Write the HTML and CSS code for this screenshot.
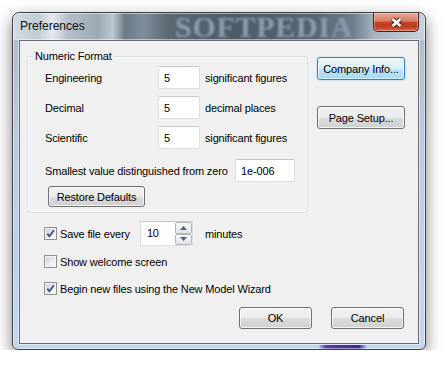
FILE: index.html
```html
<!DOCTYPE html>
<html lang="en">
<head>
    <meta charset="UTF-8">
    <title>Preferences</title>
    <link rel="stylesheet" href="styles.css">
</head>
<body>
    <div class="window">
        <div class="titlebar">
            <span class="title">Preferences</span>
            <span class="glass-mark">SOFTPEDIA</span>
            <button class="close" title="Close">
                <svg width="15" height="11" viewBox="0 0 15 11">
                    <path d="M3.5 2 L11.5 9 M11.5 2 L3.5 9" stroke="#4a2019" stroke-width="4.6" fill="none"/>
                    <path d="M3.5 2 L11.5 9 M11.5 2 L3.5 9" stroke="#fff" stroke-width="2.6" fill="none"/>
                </svg>
            </button>
        </div>

        <div class="client">
            <div class="main">
                <div class="left">
                    <div class="group">
                        <span class="group-title">Numeric Format</span>
                        <div class="fields">
                            <span>Engineering</span>
                            <input class="field" value="5">
                            <span class="unit-text">significant figures</span>

                            <span>Decimal</span>
                            <input class="field" value="5">
                            <span class="unit-text">decimal places</span>

                            <span>Scientific</span>
                            <input class="field" value="5">
                            <span class="unit-text">significant figures</span>
                        </div>
                        <div class="smallest">
                            <span class="smallest-label">Smallest value distinguished from zero</span>
                            <input class="field field-wide" value="1e-006">
                        </div>
                        <button class="btn restore">Restore Defaults</button>
                    </div>

                    <div class="options">
                        <div class="option option-save">
                            <span class="check"><svg width="11" height="11" viewBox="0 0 11 11"><path d="M2.3 5.6 L4.4 8.3 L8.9 2.2" stroke="#3f5488" stroke-width="1.9" fill="none"/></svg></span>
                            <span>Save file every</span>
                            <div class="spin">
                                <span class="spin-value">10</span>
                                <div class="spin-btns">
                                    <span class="spin-btn"><svg width="7" height="4" viewBox="0 0 7 4"><path d="M0 4 L3.5 0 L7 4 Z" fill="#4c6184"/></svg></span>
                                    <span class="spin-btn"><svg width="7" height="4" viewBox="0 0 7 4"><path d="M0 0 L7 0 L3.5 4 Z" fill="#4c6184"/></svg></span>
                                </div>
                            </div>
                            <span class="minutes">minutes</span>
                        </div>
                        <div class="option option-welcome">
                            <span class="check"></span>
                            <span>Show welcome screen</span>
                        </div>
                        <div class="option option-wizard">
                            <span class="check"><svg width="11" height="11" viewBox="0 0 11 11"><path d="M2.3 5.6 L4.4 8.3 L8.9 2.2" stroke="#3f5488" stroke-width="1.9" fill="none"/></svg></span>
                            <span>Begin new files using the New Model Wizard</span>
                        </div>
                    </div>
                </div>

                <div class="side">
                    <button class="btn btn-side btn-focus">Company Info...</button>
                    <button class="btn btn-side">Page Setup...</button>
                </div>
            </div>

            <div class="actions">
                <button class="btn btn-dialog">OK</button>
                <button class="btn btn-dialog">Cancel</button>
            </div>
        </div>
    </div>
</body>
</html>
```

FILE: styles.css
```css
/* Page */
body {
    margin: 0;
    background: #fff;
    font-family: "Liberation Sans", Arial, sans-serif;
    font-size: 11px;
    letter-spacing: -0.15px;
    color: #000;
}

/* Window frame (Aero glass) */
.window {
    position: relative;
    margin: 12px 0 0 12px;
    width: 414px;
    height: 338px;
    box-sizing: border-box;
    border: 1px solid #3b4148;
    border-radius: 7px 7px 6px 6px;
    display: flex;
    flex-direction: column;
    box-shadow: 0 6px 16px rgba(0, 0, 0, 0.5), inset 0 0 0 1px rgba(255, 255, 255, 0.5);
    background:
        linear-gradient(to right, transparent 74%, #5a3c9e 76%, #3f2a8c 84%, transparent 86%) bottom / 100% 4px no-repeat,
        linear-gradient(to right, #d3dbe2 0px, #c2ccd5 25px, #e4e9ee 40px, #b3bfca 55px, #9ca8b3 85px, #bcc8d4 100px, #6b7985 112px, #7f8e9b 130px, #5b6974 155px, #4d5b66 220px, #56646f 300px, #6e7d8a 340px, #a8b5c1 362px, #c8d2db 412px) top / 100% 27px no-repeat,
        linear-gradient(to bottom, #aebbc8 0%, #b9cbe0 40%, #c3d6ee 100%);
}

.titlebar {
    position: relative;
    height: 27px;
    display: flex;
    align-items: flex-start;
}

.title {
    position: relative;
    z-index: 1;
    padding-left: 7px;
    line-height: 27px;
    font-size: 12px;
    letter-spacing: 0;
    color: #111;
}

.glass-mark {
    position: absolute;
    left: 162px;
    top: -1px;
    font: bold 30px/30px "Liberation Serif", serif;
    letter-spacing: 0.7px;
    color: #8a9db0;
    filter: blur(1.2px);
}

.close {
    position: relative;
    margin-left: auto;
    margin-right: 6px;
    width: 46px;
    height: 19px;
    padding: 0;
    border: 1px solid #4e1d15;
    border-top: none;
    border-radius: 0 0 5px 5px;
    background: linear-gradient(#e8a897 0%, #d77d64 45%, #c24229 52%, #bf3b22 75%, #da6648 100%);
    box-shadow: inset 0 0 0 1px rgba(255, 255, 255, 0.35);
    display: flex;
    align-items: center;
    justify-content: center;
}

/* Client area */
.client {
    margin: 0 6px 5px;
    flex: 1;
    background: #f0f0f0;
    border: 1px solid #646b73;
    box-shadow: 0 0 0 1px rgba(255, 255, 255, 0.5);
    display: flex;
    flex-direction: column;
}

.main {
    display: flex;
    padding: 15px 0 0 7px;
}

.left {
    width: 281px;
}

/* Group box */
.group {
    position: relative;
    border: 1px solid #d5dfe5;
    border-radius: 3px;
    padding: 9px 0 5px 17px;
    box-shadow: inset 0 0 0 1px #fbfbfb;
}

.group-title {
    position: absolute;
    top: -8px;
    left: 5px;
    padding: 0 2px;
    line-height: 14px;
    background: #f0f0f0;
}

.fields {
    display: grid;
    grid-template-columns: 113px 42px auto;
    row-gap: 7px;
    align-items: center;
}

.unit-text {
    margin-left: 5px;
}

.field {
    box-sizing: border-box;
    width: 42px;
    height: 23px;
    margin: 0;
    padding: 0 5px;
    border: 1px solid #dbdfe6;
    border-top-color: #c3c6cc;
    border-radius: 2px;
    background: #fff;
    font: inherit;
    letter-spacing: inherit;
    color: #000;
}

.field-wide {
    width: 60px;
}

.smallest {
    display: flex;
    align-items: center;
    margin-top: 10px;
}

.smallest-label {
    width: 190px;
}

/* Buttons */
.btn {
    box-sizing: border-box;
    padding: 0;
    font: inherit;
    letter-spacing: inherit;
    color: #000;
    border: 1px solid #707070;
    border-radius: 3px;
    background: linear-gradient(#f2f2f2 0%, #ebebeb 50%, #dddddd 51%, #cfcfcf 100%);
    box-shadow: inset 0 0 0 1px rgba(255, 255, 255, 0.75);
}

.btn-focus {
    border-color: #3c7fb1;
    background: linear-gradient(#eaf6fd 0%, #d9f0fc 50%, #bee6fd 51%, #a7d9f5 100%);
    box-shadow: inset 0 0 0 1px rgba(255, 255, 255, 0.6), 0 0 2px #7ec6f0;
}

.restore {
    display: block;
    margin: 4px 0 0 3px;
    width: 97px;
    height: 21px;
}

.side {
    margin-left: 9px;
    padding-top: 1px;
    display: flex;
    flex-direction: column;
    gap: 26px;
}

.btn-side {
    width: 88px;
    height: 23px;
}

.actions {
    display: flex;
    justify-content: flex-end;
    gap: 19px;
    padding-right: 14px;
    margin-top: 12px;
}

.btn-dialog {
    width: 73px;
    height: 22px;
}

/* Check boxes */
.options {
    padding-left: 17px;
}

.option {
    display: flex;
    align-items: center;
}

.option-save {
    margin-top: 8px;
    height: 25px;
}

.option-welcome {
    margin-top: 9px;
    height: 13px;
}

.option-wizard {
    margin-top: 14px;
    height: 13px;
}

.check {
    box-sizing: border-box;
    width: 13px;
    height: 13px;
    margin-right: 3px;
    border: 1px solid #8f8f8f;
    background: linear-gradient(135deg, #c9ccd1 0%, #eeeeee 60%, #f9f9f9 100%);
    box-shadow: inset 0 0 0 1px #f4f4f4;
    display: flex;
    align-items: center;
    justify-content: center;
}

/* Spinner */
.spin {
    box-sizing: border-box;
    margin-left: 10px;
    width: 53px;
    height: 25px;
    border: 1px solid #dbdfe6;
    border-top-color: #c3c6cc;
    background: #fff;
    display: flex;
    align-items: stretch;
}

.spin-value {
    flex: 1;
    padding-left: 6px;
    line-height: 22px;
}

.spin-btns {
    width: 17px;
    display: flex;
    flex-direction: column;
}

.spin-btn {
    flex: 1;
    border: 1px solid #b3b7bd;
    border-radius: 2px;
    background: linear-gradient(#f8f8f8, #e2e4e7);
    display: flex;
    align-items: center;
    justify-content: center;
}

.minutes {
    margin-left: 12px;
}
```
